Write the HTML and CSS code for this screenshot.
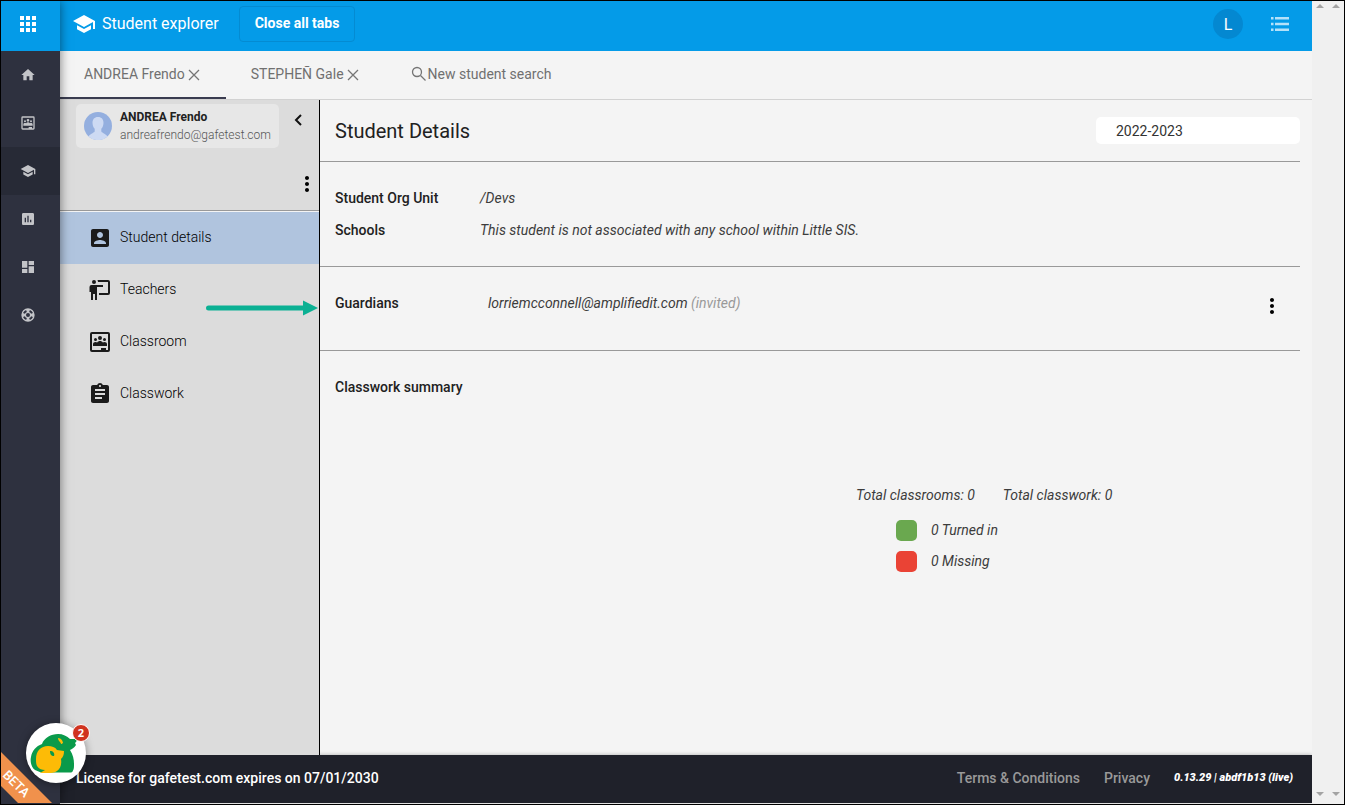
FILE: index.html
```html
<!DOCTYPE html>
<html lang="en">
<head>
<meta charset="UTF-8">
<meta name="viewport" content="width=device-width, initial-scale=1.0">
<title>Student explorer</title>
<link rel="stylesheet" href="styles.css">
</head>
<body>

<nav class="rail" aria-label="Main">
  <button class="rail-apps" aria-label="Apps">
    <svg width="24" height="24" viewBox="0 0 24 24"><path d="M4 8h4V4H4v4zm6 12h4v-4h-4v4zm-6 0h4v-4H4v4zm0-6h4v-4H4v4zm6 0h4v-4h-4v4zm6-10v4h4V4h-4zm-6 4h4V4h-4v4zm6 6h4v-4h-4v4zm0 6h4v-4h-4v4z"/></svg>
  </button>
  <a href="#" class="rail-link" aria-label="Home">
    <svg width="16" height="16" viewBox="0 0 24 24"><path d="M10 20v-6h4v6h5v-8h3L12 3 2 12h3v8z"/></svg>
  </a>
  <a href="#" class="rail-link" aria-label="Classrooms">
    <svg width="16" height="16" viewBox="0 0 24 24"><use href="#icon-classroom"/></svg>
  </a>
  <a href="#" class="rail-link active" aria-label="Students">
    <svg width="16" height="16" viewBox="0 0 24 24"><use href="#icon-school"/></svg>
  </a>
  <a href="#" class="rail-link" aria-label="Reports">
    <svg width="16" height="16" viewBox="0 0 24 24"><path d="M19 3H5c-1.100 0-2 .9-2 2v14c0 1.100.9 2 2 2h14c1.100 0 2-.9 2-2V5c0-1.100-.9-2-2-2zM9 17H7v-7h2v7zm4 0h-2V7h2v10zm4 0h-2v-4h2v4z"/></svg>
  </a>
  <a href="#" class="rail-link" aria-label="Dashboard">
    <svg width="16" height="16" viewBox="0 0 24 24"><path d="M3 13h8V3H3v10zm0 8h8v-6H3v6zm10 0h8V11h-8v10zm0-18v6h8V3h-8z"/></svg>
  </a>
  <a href="#" class="rail-link" aria-label="Help">
    <svg width="16" height="16" viewBox="0 0 24 24"><path fill-rule="evenodd" d="M12 2a10 10 0 1 0 0 20 10 10 0 0 0 0-20zm7.460 7.120-2.780 1.150a5 5 0 0 0-2.950-2.940l1.150-2.780a8 8 0 0 1 4.580 4.570zM12 15a3 3 0 1 1 0-6 3 3 0 0 1 0 6zM9.130 4.540l1.170 2.780a5 5 0 0 0-2.980 2.970L4.540 9.130a8 8 0 0 1 4.590-4.590zM4.540 14.870l2.780-1.150a5 5 0 0 0 2.970 2.960l-1.170 2.780a8 8 0 0 1-4.580-4.590zm10.340 4.590-1.150-2.780a5 5 0 0 0 2.950-2.970l2.780 1.170a8 8 0 0 1-4.580 4.580z"/></svg>
  </a>
  <div class="ribbon-box"><span class="ribbon">BETA</span></div>
</nav>

<div class="app">
  <header class="topbar">
    <svg class="topbar-icon" width="24" height="24" viewBox="0 0 24 24">
      <path id="icon-school" d="M5 13.180v4L12 21l7-3.820v-4L12 17l-7-3.820zM12 3L1 9l11 6 9-4.910V17h2V9L12 3z"/>
    </svg>
    <h1>Student explorer</h1>
    <button class="close-all">Close all tabs</button>
    <button class="avatar" aria-label="Account">L</button>
    <button class="list-button" aria-label="Activity">
      <svg width="24" height="24" viewBox="0 0 24 24"><path d="M3 5h2.500v2.500H3zM7 5h14v2.500H7zM3 10.800h2.500v2.500H3zM7 10.800h14v2.500H7zM3 16.500h2.500V19H3zM7 16.500h14V19H7z"/></svg>
    </button>
  </header>

  <nav class="tabs" aria-label="Open students">
    <a href="#" class="tab active">ANDREA Frendo
      <svg width="16" height="16" viewBox="0 0 16 16"><path class="line" d="M3 4l10 10M13 4L3 14"/></svg>
    </a>
    <a href="#" class="tab">STEPHEÑ Gale
      <svg width="16" height="16" viewBox="0 0 16 16"><path class="line" d="M3 4l10 10M13 4L3 14"/></svg>
    </a>
    <a href="#" class="tab tab-search">
      <svg width="16" height="16" viewBox="0 0 16 16"><circle class="line" cx="6" cy="6" r="4.500"/><path class="line" d="M9.500 9.500l5 5"/></svg>
      New student search
    </a>
  </nav>

  <div class="content">
    <aside class="sidebar">
      <div class="sidebar-head">
        <div class="user-row">
          <div class="user-card">
            <svg width="28" height="28" viewBox="0 0 28 28">
              <circle cx="14" cy="14" r="14" fill="#94afdf"/>
              <path fill="#cddaf3" d="M14 5c3.600 0 5.500 2.400 5.500 5.800 0 2.600-.9 4.700-2.200 6v2.400c0 1.300 3.700 2 6.200 5.200a14 14 0 0 1-19 0c2.500-3.200 6.200-3.900 6.200-5.200v-2.400c-1.300-1.300-2.200-3.400-2.200-6C8.500 7.400 10.400 5 14 5z"/>
            </svg>
            <div>
              <div class="user-name">ANDREA Frendo</div>
              <div class="user-email">andreafrendo@gafetest.com</div>
            </div>
          </div>
          <button class="collapse" aria-label="Collapse">
            <svg width="12" height="16" viewBox="0 0 12 16"><path d="M9 3L4 8l5 5" fill="none" stroke="#111" stroke-width="2"/></svg>
          </button>
        </div>
        <button class="more" aria-label="Student actions">
          <svg width="24" height="24" viewBox="0 0 24 24"><use href="#icon-more"/></svg>
        </button>
      </div>
      <a href="#" class="side-link active">
        <svg width="24" height="24" viewBox="0 0 24 24"><path d="M3 5v14c0 1.100.9 2 2 2h14c1.100 0 2-.9 2-2V5c0-1.100-.9-2-2-2H5c-1.100 0-2 .9-2 2zm12 4c0 1.660-1.340 3-3 3s-3-1.340-3-3 1.340-3 3-3 3 1.340 3 3zm-9 8c0-2 4-3.100 6-3.100s6 1.100 6 3.100v1H6v-1z"/></svg>
        <span>Student details</span>
      </a>
      <a href="#" class="side-link">
        <svg width="24" height="24" viewBox="0 0 24 24"><path d="M20 17a2 2 0 0 0 2-2V4a2 2 0 0 0-2-2H9.460c.35.610.54 1.300.54 2h10v11h-9v2m4-10v2H9v13H7v-6H5v6H3v-8H1.500V9a2 2 0 0 1 2-2H15M8 4a2 2 0 0 1-2 2 2 2 0 0 1-2-2 2 2 0 0 1 2-2 2 2 0 0 1 2 2z"/></svg>
        <span>Teachers</span>
      </a>
      <a href="#" class="side-link">
        <svg width="24" height="24" viewBox="0 0 24 24">
          <path id="icon-classroom" fill-rule="evenodd" d="M4 2h16a2 2 0 0 1 2 2v16a2 2 0 0 1-2 2H4a2 2 0 0 1-2-2V4a2 2 0 0 1 2-2zm0 2v16h9v-2h5v2h2V4H4zm8 2a2 2 0 1 1 0 4 2 2 0 0 1 0-4zM7.500 8a1.500 1.500 0 1 1 0 3 1.500 1.500 0 0 1 0-3zm9 0a1.500 1.500 0 1 1 0 3 1.500 1.500 0 0 1 0-3zM5 16v-2c0-1.300 1.200-2 2.500-2 .7 0 1.300.2 1.700.5C9.800 11.500 10.800 11 12 11s2.200.5 2.800 1.500c.4-.3 1-.5 1.700-.5 1.300 0 2.500.7 2.500 2v2H5z"/>
        </svg>
        <span>Classroom</span>
      </a>
      <a href="#" class="side-link">
        <svg width="24" height="24" viewBox="0 0 24 24"><path d="M19 3h-4.180C14.400 1.840 13.300 1 12 1s-2.400.84-2.820 2H5c-1.100 0-2 .9-2 2v14c0 1.100.9 2 2 2h14c1.100 0 2-.9 2-2V5c0-1.100-.9-2-2-2zm-7 0c.55 0 1 .45 1 1s-.45 1-1 1-1-.45-1-1 .45-1 1-1zm2 14H7v-2h7v2zm3-4H7v-2h10v2zm0-4H7V7h10v2z"/></svg>
        <span>Classwork</span>
      </a>
      <svg class="arrow" width="112" height="16" viewBox="0 0 112 16"><path d="M2.500 8H100" stroke="#0bb093" stroke-width="5" stroke-linecap="round"/><path d="M97 0.500L112 8l-15 7.500z" fill="#0bb093"/></svg>
    </aside>

    <main class="details">
      <div class="details-head">
        <h2>Student Details</h2>
        <select class="year" aria-label="School year">
          <option>2022-2023</option>
        </select>
      </div>

      <section class="block">
        <dl class="fields">
          <dt>Student Org Unit</dt>
          <dd>/Devs</dd>
          <dt>Schools</dt>
          <dd>This student is not associated with any school within Little SIS.</dd>
        </dl>
      </section>

      <section class="block guardians">
        <h3>Guardians</h3>
        <p>lorriemcconnell@amplifiedit.com <span class="muted">(invited)</span></p>
        <button class="more" aria-label="Guardian actions">
          <svg width="24" height="24" viewBox="0 0 24 24"><path id="icon-more" d="M12 8c1.100 0 2-.9 2-2s-.9-2-2-2-2 .9-2 2 .9 2 2 2zm0 2c-1.100 0-2 .9-2 2s.9 2 2 2 2-.9 2-2-.9-2-2-2zm0 6c-1.100 0-2 .9-2 2s.9 2 2 2 2-.9 2-2-.9-2-2-2z"/></svg>
        </button>
      </section>

      <section class="classwork">
        <h3>Classwork summary</h3>
        <div class="summary">
          <div class="totals">
            <span>Total classrooms: 0</span>
            <span>Total classwork: 0</span>
          </div>
          <ul class="legend">
            <li><i class="swatch green"></i><span>0 Turned in</span></li>
            <li><i class="swatch red"></i><span>0 Missing</span></li>
          </ul>
        </div>
      </section>
    </main>
  </div>

  <footer class="footer">
    <span class="license">License for gafetest.com expires on 07/01/2030</span>
    <a href="#">Terms &amp; Conditions</a>
    <a href="#">Privacy</a>
    <span class="version">0.13.29 | abdf1b13 (live)</span>
  </footer>
</div>

<div class="scrollbars">
  <div class="track"></div>
  <div class="track"></div>
</div>

<button class="chat" aria-label="Help chat">
  <svg width="60" height="60" viewBox="0 0 60 60">
    <path fill="#0a9a4a" d="M9 47C5 44 4 38 5 34c1-6 5-11 11-13 2-6 9-10 16-10 5 0 9 2 12 5h7c0 2-1 3-2 4l1 2c-2 3-4 4-6 5 3 5 4 9 4 14 0 3 0 5-1 6.500-.5 1.500-1 2-3 2H15z"/>
    <path fill="#fdbb06" d="M10 36c0-8 5-13 12-13 4 0 7 1 9 4l7 1c0 4-1 6-3 8 1 6-1 10-4 12-3 2-6 2-8 2h-9l5-3c-3 0-6-1-8-4-1-2-1-4-1-7z"/>
    <path fill="#0a9a4a" d="M24 28c3 0 5 2 4 5-3 0-4-2-4-5z"/>
    <path fill="#fdbb06" d="M32 15c3 0 5 3 5 5-1 1-2 1-2 1 0-2-3-3-3-6z"/>
  </svg>
  <span class="chat-badge">2</span>
</button>

</body>
</html>
```

FILE: styles.css
```css
* {
  box-sizing: border-box;
}

body {
  display: flex;
  height: 100vh;
  margin: 0;
  position: relative;
  border: 1px solid #000;
  background-color: #f4f4f4;
  color: #212121;
  font-family: Roboto, Arial, sans-serif;
  font-size: 14px;
  line-height: 20px;
}

h1, h2, h3, p, dl, dd, ul {
  margin: 0;
  padding: 0;
}

h3 {
  font-size: 14px;
  font-weight: 500;
}

a {
  color: inherit;
  text-decoration: none;
}

button {
  padding: 0;
  border: none;
  background: none;
  font-family: inherit;
  cursor: pointer;
}

svg {
  display: block;
  flex-shrink: 0;
}

/* left rail */
.rail {
  position: relative;
  z-index: 2;
  flex: 0 0 59px;
  background-color: #2e313f;
  box-shadow: 0 0 10px rgba(0, 0, 0, 0.5);
}

.rail-apps,
.rail-link {
  display: flex;
  align-items: center;
  justify-content: center;
  width: 100%;
  height: 48px;
  padding-right: 5px;
  fill: #c3c4c8;
}

.rail-apps {
  height: 50px;
  padding-bottom: 4px;
  background-color: #049be8;
  fill: #fff;
}

.rail-link.active {
  background-color: #272a36;
}

.ribbon-box {
  position: absolute;
  left: 0;
  bottom: 1px;
  width: 59px;
  height: 60px;
  overflow: hidden;
}

.ribbon {
  position: absolute;
  left: -45px;
  bottom: 7px;
  width: 120px;
  background-color: #f0914c;
  color: #fff;
  font-size: 13px;
  font-weight: 500;
  line-height: 24px;
  text-align: center;
  transform: rotate(45deg);
}

/* main column */
.app {
  display: flex;
  flex: 1;
  flex-direction: column;
  min-width: 0;
  border-bottom: 1px solid #fff;
}

.topbar {
  display: flex;
  align-items: center;
  flex: 0 0 50px;
  padding: 0 20px 4px 12px;
  background-color: #049be8;
  color: #fff;
  fill: #fff;
}

.topbar h1 {
  margin: 0 20px 0 6px;
  font-size: 16px;
  font-weight: 400;
}

.close-all {
  height: 36px;
  padding: 0 15px 2px;
  border: 1px solid #048bd2;
  border-radius: 4px;
  color: #fff;
  font-size: 14px;
  font-weight: 700;
}

.avatar {
  width: 30px;
  height: 30px;
  margin-left: auto;
  border-radius: 50%;
  background-color: #0488d1;
  color: #fff;
  font-size: 16px;
}

.list-button {
  margin-left: 25px;
  fill: #b4e1f9;
}

.tabs {
  display: flex;
  flex: 0 0 49px;
  border-bottom: 1px solid #d2d2d2;
  color: #707070;
}

.tab {
  display: flex;
  align-items: center;
  gap: 1px;
  padding: 0 25px 2px;
}

.tab.active {
  border-bottom: 2px solid #3a3c50;
  padding: 0 24px;
}

.line {
  fill: none;
  stroke: #757575;
  stroke-width: 1.3;
}

.content {
  display: flex;
  flex: 1;
  min-height: 0;
}

/* student sidebar */
.sidebar {
  position: relative;
  flex: 0 0 260px;
  border-right: 1px solid #000;
  background-color: #dcdcdc;
}

.sidebar-head {
  height: 112px;
  padding: 4px 0 0 16px;
  border-bottom: 1px solid #f4f4f4;
  box-shadow: inset 0 -1px 0 #999;
}

.user-row {
  display: flex;
  align-items: flex-start;
}

.user-card {
  display: flex;
  align-items: center;
  gap: 8px;
  height: 44px;
  padding: 0 8px;
  border-radius: 5px;
  background-color: #e7e7e7;
  font-size: 12px;
  line-height: 18px;
}

.user-name {
  font-weight: 700;
}

.user-email {
  color: #555;
  font-weight: 300;
}

.collapse {
  margin: 8px 0 0 13px;
}

.more {
  display: block;
  fill: #000;
}

.sidebar .more {
  margin: 24px 0 0 auto;
}

.side-link {
  display: flex;
  align-items: center;
  gap: 8px;
  height: 52px;
  padding-left: 28px;
  font-weight: 300;
  color: #000;
  fill: #1b1b1b;
}

.side-link span {
  padding-bottom: 2px;
}

.side-link.active {
  background-color: #b0c4de;
}

.arrow {
  position: absolute;
  left: 146px;
  top: 200px;
}

/* details */
.details {
  flex: 1;
  padding-right: 12px;
  overflow: auto;
}

.details-head {
  display: flex;
  align-items: center;
  justify-content: space-between;
  height: 62px;
  padding-left: 15px;
  border-bottom: 1px solid #999;
}

.details-head h2 {
  font-size: 20px;
  font-weight: 400;
}

.year {
  width: 204px;
  height: 27px;
  padding: 0 20px;
  border: none;
  border-radius: 5px;
  appearance: none;
  background-color: #fff;
  color: #333;
  font-family: inherit;
  font-size: 14px;
}

.block {
  border-bottom: 1px solid #999;
}

.fields {
  display: grid;
  grid-template-columns: 145px 1fr;
  row-gap: 12px;
  padding: 26px 15px;
}

.fields dt {
  font-weight: 500;
}

.fields dd,
.guardians p,
.summary {
  font-style: italic;
  color: #3c3c3c;
}

.guardians {
  display: flex;
  align-items: flex-start;
  padding: 26px 16px 32px 15px;
}

.guardians h3 {
  width: 153px;
}

.guardians .more {
  margin: 1px 0 0 auto;
}

.guardians .muted {
  color: #999;
}

.classwork {
  padding: 26px 0 0 15px;
}

.summary {
  width: 444px;
  margin: 88px 0 0 auto;
}

.totals {
  display: flex;
  gap: 28px;
}

.legend {
  padding: 15px 0 0 40px;
  list-style: none;
}

.legend li {
  display: flex;
  align-items: center;
  gap: 14px;
  height: 21px;
  margin-bottom: 10px;
}

.legend span {
  padding-bottom: 2px;
}

.swatch {
  width: 21px;
  height: 21px;
  border-radius: 5px;
}

.green {
  background-color: #6aa84f;
}

.red {
  background-color: #ea4335;
}

/* footer */
.footer {
  display: flex;
  align-items: center;
  flex: 0 0 48px;
  gap: 24px;
  padding: 0 15px 2px 16px;
  background-color: #1f212a;
  box-shadow: 0 0 4px rgba(0, 0, 0, 0.3);
  color: #999;
  font-weight: 500;
}

.license {
  margin-right: auto;
  color: #fff;
}

.version {
  min-width: 123px;
  color: #fff;
  font-size: 11px;
  font-style: italic;
  font-weight: 900;
}

/* scroll tracks on the right */
.scrollbars {
  display: flex;
  flex: 0 0 32px;
  background-color: #f0f0f0;
}

.track {
  display: flex;
  flex: 1;
  flex-direction: column;
  align-items: center;
  justify-content: space-between;
  padding: 3px 0 8px;
}

.track::before,
.track::after {
  content: "";
  border: 4px solid transparent;
}

.track::before {
  border-top-width: 0;
  border-bottom-color: #a3a3a3;
}

.track::after {
  border-bottom-width: 0;
  border-top-color: #a3a3a3;
}

/* chat bubble */
.chat {
  position: absolute;
  left: 25px;
  bottom: 21px;
  z-index: 3;
  width: 60px;
  height: 60px;
  border-radius: 50%;
  background-color: #fff;
  box-shadow: 0 1px 8px rgba(0, 0, 0, 0.4);
}

.chat-badge {
  position: absolute;
  top: 1px;
  right: -4px;
  width: 18px;
  height: 18px;
  border: 1px solid #fff;
  border-radius: 50%;
  background-color: #d0331f;
  color: #fff;
  font-family: "Open Sans", sans-serif;
  font-size: 11px;
  font-weight: 700;
  line-height: 16px;
}
```
